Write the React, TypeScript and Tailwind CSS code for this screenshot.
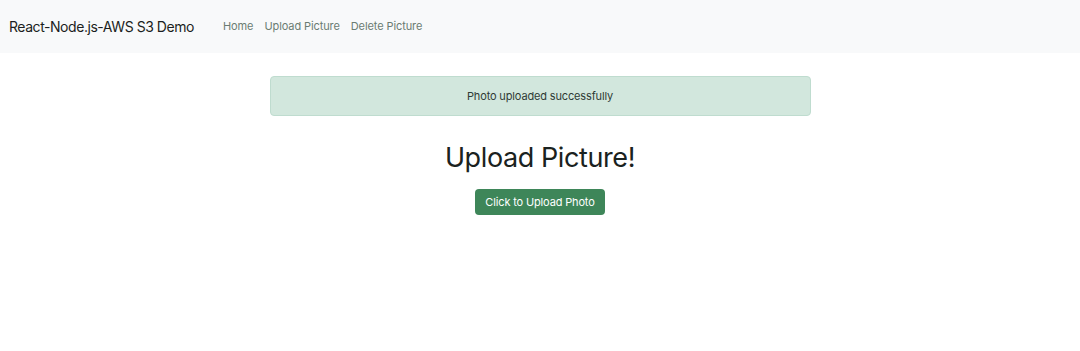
export default function App() {
  const links = ["Home", "Upload Picture", "Delete Picture"];

  return (
    <div className="min-h-[351px] bg-white font-['Inter',sans-serif] text-[#212529]">
      {/* Navbar */}
      <nav className="flex h-[53px] items-center bg-[#f8f9fa] px-[9px]">
        <span className="mr-[29px] text-[14px] tracking-[-0.45px] text-[#1b1e21]">
          React-Node.js-AWS S3 Demo
        </span>
        <div className="flex gap-[11px]">
          {links.map((l) => (
            <a key={l} className="text-[11px] tracking-[-0.1px] text-[#6b7c72]">
              {l}
            </a>
          ))}
        </div>
      </nav>

      {/* Main */}
      <div className="mx-auto mt-[23px] flex w-[541px] flex-col items-center">
        <div className="flex h-[40px] w-full items-center justify-center rounded-[4px] border border-[#bfdccf] bg-[#d2e7dd] text-[11px] tracking-[-0.15px] text-[#2f3b35]">
          Photo uploaded successfully
        </div>
        <h1 className="mt-[24px] text-[27px] leading-[36px] tracking-[-0.4px] text-[#1a2220]">
          Upload Picture!
        </h1>
        <button className="mt-[13px] h-[26px] rounded-[4px] bg-[#3e8659] px-[10px] text-[11px] tracking-[-0.15px] text-white">
          Click to Upload Photo
        </button>
      </div>
    </div>
  );
}
